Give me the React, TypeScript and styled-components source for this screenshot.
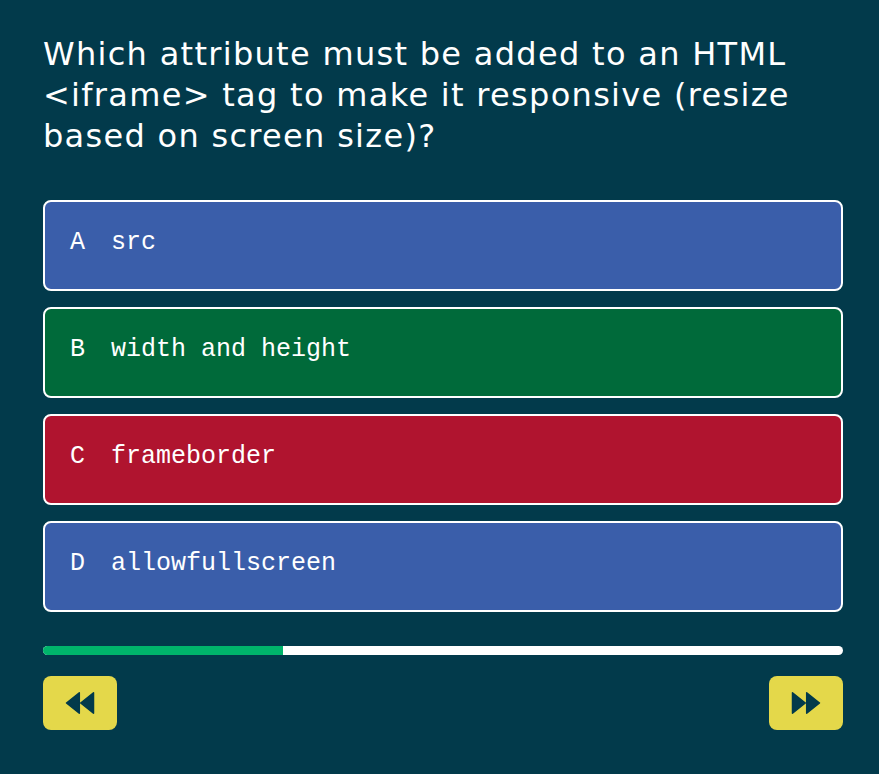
import React from 'react';
import styled, { createGlobalStyle } from 'styled-components';

interface Answer {
  letter: string;
  text: string;
  tone: 'blue' | 'green' | 'red';
}

const answers: Answer[] = [
  { letter: 'A', text: 'src', tone: 'blue' },
  { letter: 'B', text: 'width and height', tone: 'green' },
  { letter: 'C', text: 'frameborder', tone: 'red' },
  { letter: 'D', text: 'allowfullscreen', tone: 'blue' },
];

const tones = {
  blue: '#3a5eaa',
  green: '#006a3a',
  red: '#b0142f',
};

const progress = 30;

const Arrows: React.FC<{ back?: boolean }> = ({ back }) => (
  <svg width="30" height="24" viewBox="0 0 30 24" style={back ? undefined : { transform: 'scaleX(-1)' }}>
    <g fill="#023a4b" stroke="#023a4b" strokeWidth="1.5" strokeLinejoin="round">
      <path d="M1.5 12 L14.3 1.8 L14.3 22.2 Z" />
      <path d="M15.7 12 L28.5 1.8 L28.5 22.2 Z" />
    </g>
  </svg>
);

const App: React.FC = () => {
  return (
    <Page>
      <GlobalStyle />
      <Question>
        Which attribute must be added to an HTML &lt;iframe&gt; tag to make it responsive (resize
        based on screen size)?
      </Question>
      <Options>
        {answers.map((a) => (
          <Option key={a.letter} tone={a.tone}>
            <Letter>{a.letter}</Letter>
            <span>{a.text}</span>
          </Option>
        ))}
      </Options>
      <Track>
        <Fill style={{ width: `${progress}%` }} />
      </Track>
      <Nav>
        <NavButton aria-label="previous">
          <Arrows back />
        </NavButton>
        <NavButton aria-label="next">
          <Arrows />
        </NavButton>
      </Nav>
    </Page>
  );
};

const GlobalStyle = createGlobalStyle`
  body {
    margin: 0;
    background: #023a4b;
  }
`;

const Page = styled.div`
  width: 879px;
  height: 774px;
  box-sizing: border-box;
  padding: 34px 36px 0 43px;
  background: #023a4b;
  font-family: 'DejaVu Sans', 'Open Sans', sans-serif;
  color: #fff;
`;

const Question = styled.h1`
  margin: 0;
  font-size: 32px;
  font-weight: 400;
  line-height: 41px;
  letter-spacing: 1.3px;
  max-width: 800px;
`;

const Options = styled.div`
  display: flex;
  flex-direction: column;
  gap: 16px;
  margin-top: 43px;
  width: 800px;
`;

const Option = styled.div<{ tone: Answer['tone'] }>`
  display: flex;
  align-items: center;
  height: 91px;
  box-sizing: border-box;
  padding: 0 0 6px 25px;
  border: 2px solid #fff;
  border-radius: 8px;
  background: ${(p) => tones[p.tone]};
  font-family: 'Liberation Mono', 'DejaVu Sans Mono', monospace;
  font-size: 25px;
  color: #fff;
`;

const Letter = styled.span`
  width: 41px;
`;

const Track = styled.div`
  width: 800px;
  height: 9px;
  margin-top: 34px;
  border-radius: 5px;
  background: #fff;
  overflow: hidden;
`;

const Fill = styled.div`
  height: 100%;
  background: #00b46b;
`;

const Nav = styled.div`
  display: flex;
  justify-content: space-between;
  width: 800px;
  margin-top: 21px;
`;

const NavButton = styled.button`
  display: flex;
  align-items: center;
  justify-content: center;
  width: 74px;
  height: 54px;
  border: none;
  border-radius: 8px;
  background: #e4d84a;
  padding: 0;
  cursor: pointer;
`;

export default App;
